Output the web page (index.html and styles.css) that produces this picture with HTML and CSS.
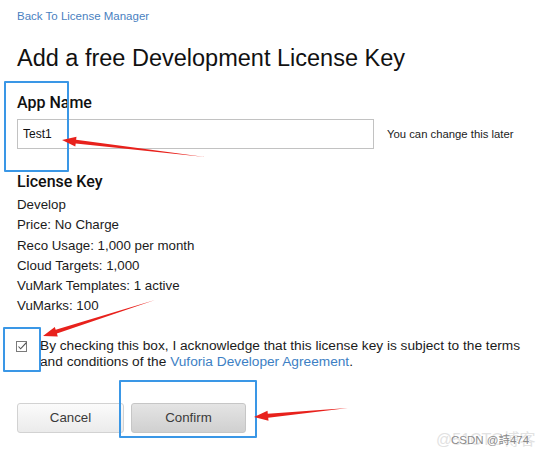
FILE: index.html
```
<!DOCTYPE html>
<html lang="en">
<head>
    <meta charset="UTF-8">
    <meta name="viewport" content="width=device-width, initial-scale=1.0">
    <title>Add a free Development License Key</title>
    <link rel="stylesheet" href="styles.css">
</head>
<body>
    <div id="page">
        <a class="back-link" href="#">Back To License Manager</a>
        <h1 class="page-title">Add a free Development License Key</h1>

        <div class="field-label">App Name</div>
        <div class="name-row">
            <input class="name-input" type="text" value="Test1">
            <span class="name-hint">You can change this later</span>
        </div>

        <div class="field-label key-label">License Key</div>
        <ul class="key-details">
            <li>Develop</li>
            <li>Price: No Charge</li>
            <li>Reco Usage: 1,000 per month</li>
            <li>Cloud Targets: 1,000</li>
            <li>VuMark Templates: 1 active</li>
            <li>VuMarks: 100</li>
        </ul>

        <div class="agree-row">
            <svg class="agree-check" width="12" height="12" viewBox="0 0 12 12">
                <rect x="0.5" y="0.5" width="10" height="10" fill="#fff" stroke="#7a7a7a"/>
                <path d="M2.5 5.5 L4.6 7.8 L10.5 1.5" fill="none" stroke="#555" stroke-width="1.1"/>
            </svg>
            <p class="agree-text">By checking this box, I acknowledge that this license key is subject to the terms and conditions of the <a href="#">Vuforia Developer Agreement</a>.</p>
        </div>

        <div class="actions">
            <button class="btn btn-cancel">Cancel</button>
            <button class="btn btn-confirm">Confirm</button>
        </div>

        <!-- annotation marks drawn over the screenshot -->
        <div class="mark mark-name"></div>
        <div class="mark mark-check"></div>
        <div class="mark mark-confirm"></div>
        <svg class="arrows" width="544" height="453" viewBox="0 0 544 453">
            <polygon points="62,140 75.3,146.6 75.7,143.6 205,157 76.1,139.7 76.5,136.7"/>
            <polygon points="43,336 57.8,336.5 56.9,333.6 155,300 55.7,329.8 54.8,326.9"/>
            <polygon points="254,417 268.5,420.7 268.2,417.7 348,408 267.8,413.7 267.5,410.7"/>
        </svg>

        <div class="watermark">
            <span class="wm-back">@51CTO博客</span>
            <span class="wm-front">CSDN @詩474</span>
        </div>
    </div>
</body>
</html>
```

FILE: styles.css
```
body {
    margin: 0;
    background: #fff;
    font-family: 'Liberation Sans', Arial, sans-serif;
    color: #1b1b1b;
}

#page {
    position: relative;
    width: 544px;
    height: 453px;
    box-sizing: border-box;
    padding: 9px 0 0 17px;
    overflow: hidden;
}

.back-link {
    display: block;
    font-size: 11.5px;
    line-height: 14px;
    color: #4a7fbf;
    text-decoration: none;
}

.page-title {
    margin: 21px 0 0;
    font-size: 23.5px;
    line-height: 28px;
    font-weight: normal;
    color: #111;
}

.field-label {
    margin-top: 21px;
    font-family: Roboto, 'Liberation Sans', sans-serif;
    font-size: 16px;
    line-height: 20px;
    font-weight: 500;
    color: #111;
}

.name-row {
    display: flex;
    align-items: center;
    margin-top: 6px;
}

.name-input {
    width: 357px;
    height: 30px;
    box-sizing: border-box;
    margin: 0;
    padding: 0 5px;
    border: 1px solid #c2c2c2;
    font-family: 'Liberation Sans', Arial, sans-serif;
    font-size: 12px;
    color: #111;
    outline: none;
}

.name-hint {
    margin-left: 13px;
    font-size: 11.3px;
    color: #222;
}

.key-label {
    margin-top: 23px;
}

.key-details {
    list-style: none;
    margin: 3px 0 0;
    padding: 0;
    font-size: 13.3px;
    line-height: 20.3px;
}

.agree-row {
    display: flex;
    align-items: flex-start;
    margin-top: 21px;
}

.agree-check {
    flex: none;
    margin: 3px 0 0 -1px;
}

.agree-text {
    width: 495px;
    margin: 0 0 0 12px;
    font-size: 13.7px;
    line-height: 16px;
}

.agree-text a {
    color: #3d7fc4;
    text-decoration: none;
}

.actions {
    display: flex;
    gap: 7px;
    margin-top: 33px;
}

.btn {
    height: 30px;
    border-radius: 3px;
    font-family: 'Liberation Sans', Arial, sans-serif;
    font-size: 13.3px;
    color: #3a3a3a;
    cursor: pointer;
}

.btn-cancel {
    width: 107px;
    border: 1px solid #d2d2d2;
    background: linear-gradient(#fbfbfb, #ebebeb);
}

.btn-confirm {
    width: 115px;
    border: 1px solid #c6c6c6;
    background: linear-gradient(#e4e4e4, #d0d0d0);
}

.mark {
    position: absolute;
    border: 2px solid #3a97e6;
    border-radius: 1px;
}

.mark-name {
    left: 4px;
    top: 81px;
    width: 61px;
    height: 87px;
}

.mark-check {
    left: 3px;
    top: 327px;
    width: 34px;
    height: 41px;
}

.mark-confirm {
    left: 119px;
    top: 380px;
    width: 134px;
    height: 54px;
}

.arrows {
    position: absolute;
    left: 0;
    top: 0;
    pointer-events: none;
}

.arrows polygon {
    fill: #e8211c;
}

.watermark {
    position: absolute;
    left: 436px;
    top: 426px;
    width: 104px;
    height: 22px;
}

.wm-back {
    position: absolute;
    left: 0;
    top: 0;
    font-size: 16px;
    color: #e2e2e2;
    white-space: nowrap;
    font-family: 'Liberation Sans', 'Noto Sans CJK SC', sans-serif;
}

.wm-front {
    position: absolute;
    left: 15px;
    top: 5px;
    font-size: 11.5px;
    color: #8a8a8a;
    white-space: nowrap;
    font-family: 'Liberation Sans', 'Noto Sans CJK TC', sans-serif;
    text-shadow: 0 0 2px #fff;
}
```
